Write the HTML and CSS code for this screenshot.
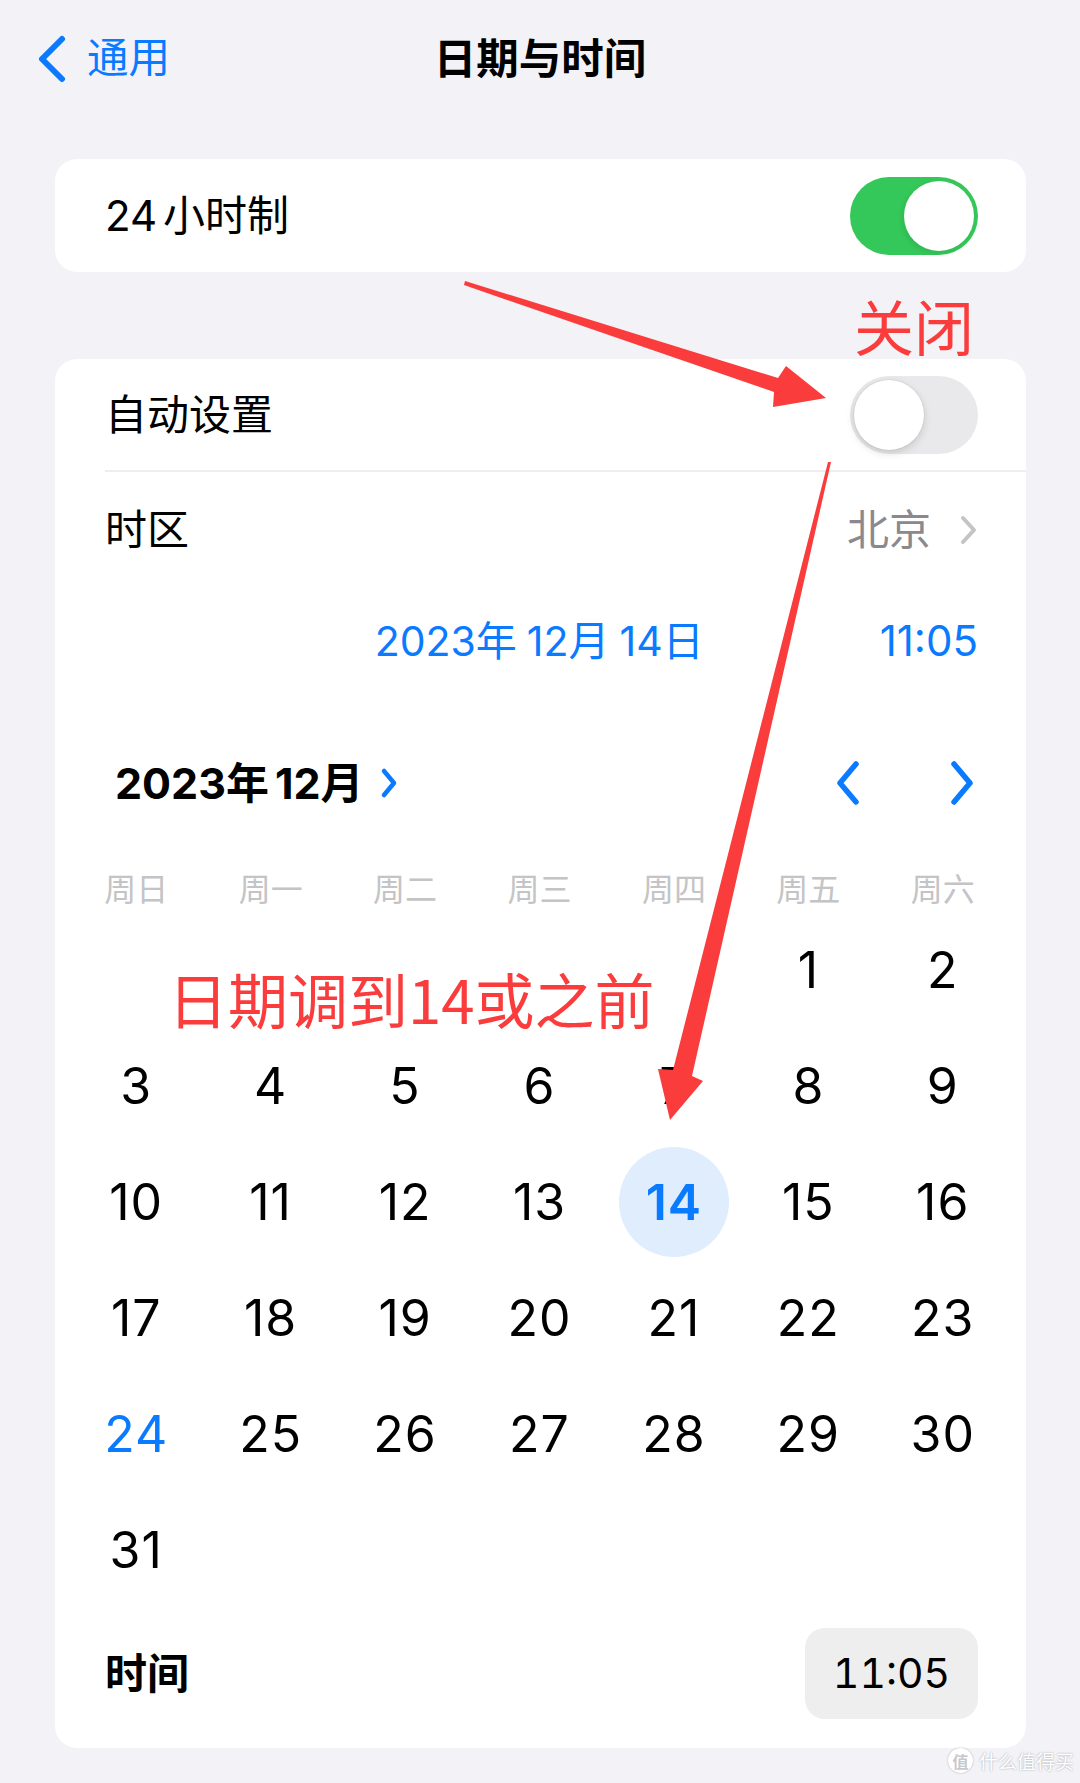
FILE: index.html
```html
<!DOCTYPE html>
<html lang="zh-CN">
<head>
<meta charset="utf-8">
<title>日期与时间</title>
<link rel="stylesheet" href="styles.css">
</head>
<body>
<div class="page">
  <header class="nav">
    <div class="back">
      <svg class="back-chev" viewBox="0 0 31 48" width="31" height="48"><path d="M26 4 L6 24 L26 44" fill="none" stroke="#0a7aff" stroke-width="6" stroke-linecap="round" stroke-linejoin="round"/></svg>
      <span>通用</span>
    </div>
    <div class="title">日期与时间</div>
    <div></div>
  </header>

  <section class="card card-24">
    <span class="label">24<span class="sp"></span>小时制</span>
    <span class="toggle on"><span class="knob"></span></span>
  </section>

  <section class="card card-main">
    <div class="row row-auto">
      <span class="label">自动设置</span>
      <span class="toggle off"><span class="knob"></span></span>
    </div>
    <div class="sep"></div>
    <div class="row row-tz">
      <span class="label">时区</span>
      <span class="tz-val">北京<svg viewBox="0 0 19 32" width="19" height="32"><path d="M4 4 L15 16 L4 28" fill="none" stroke="#c4c4c7" stroke-width="4" stroke-linecap="round" stroke-linejoin="round"/></svg></span>
    </div>
    <div class="row row-date">
      <span class="date-val">2023年<span class="sp2"></span>12月<span class="sp2"></span>14日</span>
      <span class="time-val">11:05</span>
    </div>

    <div class="cal">
      <div class="cal-head">
        <div class="month">2023年<span class="sp"></span>12月<svg viewBox="0 0 18 32" width="18" height="32"><path d="M4 4 L14 16 L4 28" fill="none" stroke="#0a7aff" stroke-width="4.5" stroke-linecap="round" stroke-linejoin="round"/></svg></div>
        <div class="arrows">
          <svg viewBox="0 0 26 46" width="26" height="46"><path d="M21 4 L5 23 L21 42" fill="none" stroke="#0a7aff" stroke-width="5.5" stroke-linecap="round" stroke-linejoin="round"/></svg>
          <svg viewBox="0 0 26 46" width="26" height="46"><path d="M5 4 L21 23 L5 42" fill="none" stroke="#0a7aff" stroke-width="5.5" stroke-linecap="round" stroke-linejoin="round"/></svg>
        </div>
      </div>
      <div class="weekdays">
        <span>周日</span><span>周一</span><span>周二</span><span>周三</span><span>周四</span><span>周五</span><span>周六</span>
      </div>
      <div class="days">
        <span></span><span></span><span></span><span></span><span></span>
        <span>1</span><span>2</span>
        <span>3</span><span>4</span><span>5</span><span>6</span><span>7</span><span>8</span><span>9</span>
        <span>10</span><span>11</span><span>12</span><span>13</span><span><b class="sel">14</b></span><span>15</span><span>16</span>
        <span>17</span><span>18</span><span>19</span><span>20</span><span>21</span><span>22</span><span>23</span>
        <span class="today">24</span><span>25</span><span>26</span><span>27</span><span>28</span><span>29</span><span>30</span>
        <span>31</span>
      </div>
    </div>

    <div class="row row-time">
      <span class="label strong">时间</span>
      <span class="pill">11:05</span>
    </div>
  </section>

  <div class="annot">
    <svg class="arrows-svg" viewBox="0 0 1080 1783" width="1080" height="1783">
      <polygon points="465,281 778,378 786,366 826,398 773,407 774,392 464,285" fill="#fa3c3c"/>
      <polygon points="828,462 831,462 692,1076 703,1081 670,1120 658,1069 673,1070" fill="#fa3c3c"/>
    </svg>
    <span class="note note-close">关闭</span>
    <span class="note note-date">日期调到14或之前</span>
  </div>

  <div class="watermark"><span class="wm-logo">值</span><span class="wm-text">什么值得买</span></div>
</div>
</body>
</html>
```
FILE: styles.css
```css
* { box-sizing: border-box; }

body {
  margin: 0;
  background: #f2f2f7;
  font-family: Inter, "Noto Sans CJK SC", sans-serif;
  color: #000;
}

.page {
  position: relative;
  width: 1080px;
  height: 1783px;
  overflow: hidden;
}

/* nav */
.nav {
  height: 118px;
  display: grid;
  grid-template-columns: 1fr auto 1fr;
  align-items: center;
}
.back {
  display: flex;
  align-items: center;
  gap: 20px;
  padding-left: 36px;
  color: #0a7aff;
  font-size: 41.5px;
  line-height: 1;
}
.title {
  font-size: 42.5px;
  font-weight: 600;
  line-height: 1;
}

/* cards */
.card {
  background: #fff;
  border-radius: 22px;
  margin: 0 54px 0 55px;
}
.card-24 {
  margin-top: 41px;
  height: 113px;
  display: flex;
  align-items: center;
  justify-content: space-between;
  padding: 0 48px 0 50px;
}
.card-main {
  margin-top: 87px;
  padding-bottom: 29px;
}

.label {
  font-size: 42px;
  line-height: 1;
}
.label.strong { font-weight: 600; }

.row {
  display: flex;
  align-items: center;
  justify-content: space-between;
  padding: 0 48px 0 50px;
}
.row-auto { height: 111px; }
.sep {
  height: 2px;
  background: #eeeef0;
  margin-left: 50px;
}
.row-tz { height: 116px; }
.row-date {
  height: 106px;
  justify-content: flex-end;
}

/* toggles */
.toggle {
  width: 128px;
  height: 78px;
  border-radius: 39px;
  display: flex;
  align-items: center;
  padding: 4px;
}
.toggle .knob {
  width: 70px;
  height: 70px;
  border-radius: 50%;
  background: #fff;
}
.toggle.on {
  background: #34c759;
  justify-content: flex-end;
}
.toggle.on .knob {
  box-shadow: -2px 2px 5px rgba(0, 0, 0, 0.08);
}
.toggle.off {
  background: #e9e9eb;
  justify-content: flex-start;
}
.toggle.off .knob {
  box-shadow: 0 3px 8px rgba(0, 0, 0, 0.15), 0 0 0 1px rgba(0, 0, 0, 0.04);
}

.tz-val {
  display: flex;
  align-items: center;
  gap: 28px;
  color: #8a8a8e;
  font-size: 42px;
  line-height: 1;
}

.sp { display: inline-block; width: 6px; }
.sp2 { display: inline-block; width: 10px; }

.date-val {
  color: #0a7aff;
  font-size: 41px;
  line-height: 1;
  margin-right: 176px;
}
.time-val {
  color: #0a7aff;
  font-size: 42px;
  line-height: 1;
}

/* calendar */
.cal-head {
  margin-top: 44px;
  height: 90px;
  display: flex;
  align-items: center;
  justify-content: space-between;
  padding: 0 51px 0 60px;
}
.month {
  display: flex;
  align-items: center;
  font-size: 43px;
  font-weight: 700;
  line-height: 1;
}
.month svg { margin-left: 16px; }
.arrows {
  display: flex;
  align-items: center;
  gap: 88px;
}

.weekdays {
  margin: 40px 16px 0 14px;
  height: 44px;
  display: grid;
  grid-template-columns: repeat(7, 1fr);
  align-items: center;
  text-align: center;
  color: #c4c4c6;
  font-size: 32px;
  line-height: 1;
}

.days {
  margin: 0 16px 0 14px;
  display: grid;
  grid-template-columns: repeat(7, 1fr);
  grid-auto-rows: 116px;
  align-items: center;
  justify-items: center;
  font-size: 50px;
  line-height: 1;
  letter-spacing: 1px;
}
.days span {
  display: flex;
  align-items: center;
  justify-content: center;
}
.days .sel {
  width: 110px;
  height: 110px;
  border-radius: 50%;
  background: #e0edfd;
  color: #0a7aff;
  font-weight: 600;
  display: flex;
  align-items: center;
  justify-content: center;
}
.days .today { color: #0a7aff; }

.row-time {
  margin-top: 20px;
  height: 91px;
}
.pill {
  width: 173px;
  height: 91px;
  border-radius: 20px;
  background: #eeeeef;
  display: flex;
  align-items: center;
  justify-content: center;
  font-size: 41px;
  line-height: 1;
  font-variant-numeric: tabular-nums;
}

/* annotations overlay */
.annot {
  position: absolute;
  left: 0;
  top: 0;
  width: 1080px;
  height: 1783px;
  pointer-events: none;
}
.arrows-svg {
  position: absolute;
  left: 0;
  top: 0;
}
.note {
  position: absolute;
  color: #fa3c3c;
  font-family: "Noto Sans CJK SC", sans-serif;
  line-height: 1;
  white-space: nowrap;
}
.note-close {
  left: 854px;
  top: 295px;
  font-size: 60px;
}
.note-date {
  left: 168px;
  top: 968px;
  font-size: 60px;
}

.watermark {
  position: absolute;
  left: 948px;
  top: 1748px;
  display: flex;
  align-items: center;
  gap: 6px;
  color: #fff;
  font-family: "Noto Sans CJK SC", sans-serif;
  font-size: 19px;
  line-height: 1;
  text-shadow: 0 0 2px rgba(0, 0, 0, 0.35);
}
.wm-logo {
  width: 25px;
  height: 25px;
  border-radius: 50%;
  background: #fff;
  color: #c8c8cc;
  font-size: 16px;
  font-weight: 700;
  display: flex;
  align-items: center;
  justify-content: center;
  text-shadow: none;
  box-shadow: 0 0 2px rgba(0, 0, 0, 0.3);
}
```
